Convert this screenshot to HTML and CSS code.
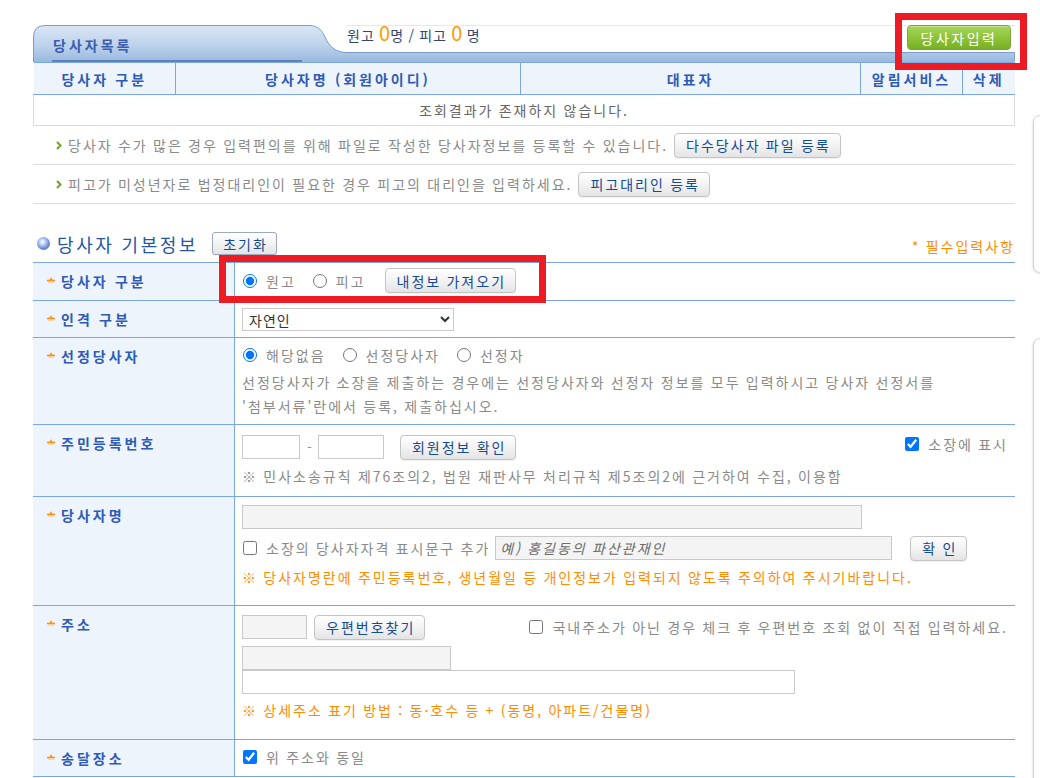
FILE: index.html
```html
<!DOCTYPE html>
<html lang="ko">
<head>
<meta charset="utf-8">
<title>당사자 입력</title>
<link rel="stylesheet" href="styles.css">
</head>
<body>
<div class="page">
  <section class="party-list">
    <div class="list-head">
      <svg class="tab-bg" width="982" height="37" viewBox="0 0 982 37" aria-hidden="true">
        <defs>
          <linearGradient id="tabg" x1="0" y1="0" x2="0" y2="1">
            <stop offset="0" stop-color="#dae7f5"/>
            <stop offset="0.6" stop-color="#b9cfea"/>
            <stop offset="1" stop-color="#98b8de"/>
          </linearGradient>
        </defs>
        <path d="M314 0.5 H982" stroke="#e8e8e8" fill="none"/>
        <path d="M0.5 37 V12 Q0.5 0.5 12 0.5 H276 C286 0.5 289 6 292 12 C296 21 302 27.5 314 27.5 H981.5 V37 Z" fill="url(#tabg)"/>
        <path d="M0.5 37 V12 Q0.5 0.5 12 0.5 H276 C286 0.5 289 6 292 12 C296 21 302 27.5 314 27.5 H981.5 V36" fill="none" stroke="#7b9bcc"/>
        <rect x="19" y="35" width="250" height="2" fill="#5f82b9"/>
      </svg>
      <div class="head-row">
        <div class="tab-label">당사자목록</div>
        <div class="summary">원고 <span class="cnt">0</span>명 / 피고 <span class="cnt">0</span> 명</div>
        <button class="btn-green" type="button">당사자입력</button>
      </div>
    </div>
    <table class="list-table">
      <colgroup>
        <col class="c1"><col class="c2"><col class="c3"><col class="c4"><col class="c5">
      </colgroup>
      <thead>
        <tr><th>당사자 구분</th><th>당사자명 (회원아이디)</th><th>대표자</th><th>알림서비스</th><th>삭제</th></tr>
      </thead>
      <tbody>
        <tr><td colspan="5">조회결과가 존재하지 않습니다.</td></tr>
      </tbody>
    </table>
    <div class="info">
      <svg class="chev" width="6" height="9" viewBox="0 0 6 9" aria-hidden="true"><polyline points="1,1 4.5,4.5 1,8" fill="none" stroke="#6fa324" stroke-width="2"/></svg>
      <span>당사자 수가 많은 경우 입력편의를 위해 파일로 작성한 당사자정보를 등록할 수 있습니다.</span>
      <button class="btn" type="button">다수당사자 파일 등록</button>
    </div>
    <div class="info">
      <svg class="chev" width="6" height="9" viewBox="0 0 6 9" aria-hidden="true"><polyline points="1,1 4.5,4.5 1,8" fill="none" stroke="#6fa324" stroke-width="2"/></svg>
      <span>피고가 미성년자로 법정대리인이 필요한 경우 피고의 대리인을 입력하세요.</span>
      <button class="btn" type="button">피고대리인 등록</button>
    </div>
  </section>

  <section class="basic">
    <div class="sec-head">
      <span class="orb"></span>
      <h2 class="sec-title">당사자 기본정보</h2>
      <button class="btn btn-reset" type="button">초기화</button>
      <span class="req">* 필수입력사항</span>
    </div>

    <div class="form">
      <div class="frow h1">
        <div class="flabel"><svg class="star" width="8" height="7" viewBox="0 0 8 7"><path d="M4 0 L5.2 2.5 L8 2.7 L8 4.3 L0 4.3 L0 2.7 L2.8 2.5 Z" fill="#f7941d"/><rect x="1" y="4.3" width="6" height="1.4" fill="#fbc98a"/></svg>당사자 구분</div>
        <div class="cell pt5">
          <div class="line l25">
            <label class="opt"><input type="radio" name="gubun" checked><span>원고</span></label>
            <label class="opt"><input type="radio" name="gubun"><span>피고</span></label>
            <button class="btn ml3" type="button">내정보 가져오기</button>
          </div>
        </div>
      </div>

      <div class="frow h2">
        <div class="flabel"><svg class="star" width="8" height="7" viewBox="0 0 8 7"><path d="M4 0 L5.2 2.5 L8 2.7 L8 4.3 L0 4.3 L0 2.7 L2.8 2.5 Z" fill="#f7941d"/><rect x="1" y="4.3" width="6" height="1.4" fill="#fbc98a"/></svg>인격 구분</div>
        <div class="cell pt7">
          <select class="sel"><option>자연인</option></select>
        </div>
      </div>

      <div class="frow h3">
        <div class="flabel"><svg class="star" width="8" height="7" viewBox="0 0 8 7"><path d="M4 0 L5.2 2.5 L8 2.7 L8 4.3 L0 4.3 L0 2.7 L2.8 2.5 Z" fill="#f7941d"/><rect x="1" y="4.3" width="6" height="1.4" fill="#fbc98a"/></svg>선정당사자</div>
        <div class="cell pt5">
          <div class="line l24">
            <label class="opt"><input type="radio" name="sj" checked><span>해당없음</span></label>
            <label class="opt"><input type="radio" name="sj"><span>선정당사자</span></label>
            <label class="opt"><input type="radio" name="sj"><span>선정자</span></label>
          </div>
          <p class="desc">선정당사자가 소장을 제출하는 경우에는 선정당사자와 선정자 정보를 모두 입력하시고 당사자 선정서를<br>'첨부서류'란에서 등록, 제출하십시오.</p>
        </div>
      </div>

      <div class="frow h4">
        <div class="flabel"><svg class="star" width="8" height="7" viewBox="0 0 8 7"><path d="M4 0 L5.2 2.5 L8 2.7 L8 4.3 L0 4.3 L0 2.7 L2.8 2.5 Z" fill="#f7941d"/><rect x="1" y="4.3" width="6" height="1.4" fill="#fbc98a"/></svg>주민등록번호</div>
        <div class="cell pt9">
          <div class="line l26">
            <input class="inp w-j1" type="text">
            <span class="dash">-</span>
            <input class="inp w-j2" type="text">
            <button class="btn ml16" type="button">회원정보 확인</button>
            <label class="chk right top"><input type="checkbox" checked><span>소장에 표시</span></label>
          </div>
          <p class="note">※ 민사소송규칙 제76조의2, 법원 재판사무 처리규칙 제5조의2에 근거하여 수집, 이용함</p>
        </div>
      </div>

      <div class="frow h5">
        <div class="flabel"><svg class="star" width="8" height="7" viewBox="0 0 8 7"><path d="M4 0 L5.2 2.5 L8 2.7 L8 4.3 L0 4.3 L0 2.7 L2.8 2.5 Z" fill="#f7941d"/><rect x="1" y="4.3" width="6" height="1.4" fill="#fbc98a"/></svg>당사자명</div>
        <div class="cell pt8">
          <input class="inp dis w-name" type="text" disabled>
          <div class="line l26 mt6">
            <label class="chk"><input type="checkbox"><span>소장의 당사자자격 표시문구 추가</span></label>
            <input class="inp dis w-qual ml5" type="text" placeholder="예) 홍길동의 파산관재인">
            <button class="btn ml18" type="button">확 인</button>
          </div>
          <p class="note orange">※ 당사자명란에 주민등록번호, 생년월일 등 개인정보가 입력되지 않도록 주의하여 주시기바랍니다.</p>
        </div>
      </div>

      <div class="frow h6">
        <div class="flabel"><svg class="star" width="8" height="7" viewBox="0 0 8 7"><path d="M4 0 L5.2 2.5 L8 2.7 L8 4.3 L0 4.3 L0 2.7 L2.8 2.5 Z" fill="#f7941d"/><rect x="1" y="4.3" width="6" height="1.4" fill="#fbc98a"/></svg>주소</div>
        <div class="cell pt8">
          <div class="line l26">
            <input class="inp dis w-zip" type="text">
            <button class="btn ml7" type="button">우편번호찾기</button>
            <label class="chk right"><input type="checkbox"><span>국내주소가 아닌 경우 체크 후 우편번호 조회 없이 직접 입력하세요.</span></label>
          </div>
          <input class="inp dis w-a1 mt6" type="text">
          <input class="inp w-a2" type="text">
          <p class="note orange mt5">※ 상세주소 표기 방법 : 동·호수 등 + (동명, 아파트/건물명)</p>
        </div>
      </div>

      <div class="frow h7">
        <div class="flabel"><svg class="star" width="8" height="7" viewBox="0 0 8 7"><path d="M4 0 L5.2 2.5 L8 2.7 L8 4.3 L0 4.3 L0 2.7 L2.8 2.5 Z" fill="#f7941d"/><rect x="1" y="4.3" width="6" height="1.4" fill="#fbc98a"/></svg>송달장소</div>
        <div class="cell pt5">
          <div class="line l24">
            <label class="chk"><input type="checkbox" checked><span>위 주소와 동일</span></label>
          </div>
        </div>
      </div>
    </div>
  </section>
</div>

<div class="side-panel sp1"></div>
<div class="side-panel sp2"></div>
<div class="mark mark-btn"></div>
<div class="mark mark-gubun"></div>
</body>
</html>
```

FILE: styles.css
```css
* { box-sizing: border-box; }
html, body { margin: 0; padding: 0; background: #fff; overflow: hidden; }
body {
  font-family: "Noto Sans CJK KR", "Noto Sans", sans-serif;
  font-size: 14px;
  line-height: 20px;
  letter-spacing: 2px;
  word-spacing: -0.6px;
  color: #8a8a8a;
  width: 1040px;
  height: 778px;
  position: relative;
}
button, input, select { font-family: inherit; font-size: 14px; letter-spacing: 2px; word-spacing: -0.6px; }
p, h2 { margin: 0; }

.page { width: 982px; margin-left: 33px; padding-top: 25px; }

/* list header */
.list-head { display: grid; height: 37px; }
.list-head > * { grid-area: 1 / 1; }
.tab-bg { display: block; }
.head-row { display: flex; align-items: flex-start; }
.tab-label {
  width: 314px;
  padding: 10px 0 0 20px;
  font-weight: bold;
  color: #3a5db2;
  line-height: 20px;
  letter-spacing: 3px;
}
.summary { color: #34466e; line-height: 20px; margin-top: -2px; letter-spacing: 1px; }
.summary .cnt { color: #ff9a00; font-size: 20px; letter-spacing: 0; }
.btn-green {
  margin-left: auto;
  margin-right: 4px;
  width: 104px;
  height: 25px;
  padding: 0;
  border: 1px solid #78a637;
  border-radius: 4px;
  background: linear-gradient(#a8d55c, #8cc236 55%, #78af26);
  color: #fff;
  letter-spacing: 2.5px;
  box-shadow: inset 0 1px 0 rgba(255,255,255,0.35);
}

.list-table { width: 981px; border-collapse: collapse; table-layout: fixed; }
.list-table .c1 { width: 142px; }
.list-table .c2 { width: 345px; }
.list-table .c3 { width: 340px; }
.list-table .c4 { width: 102px; }
.list-table .c5 { width: 52px; }
.list-table th {
  height: 32px;
  padding: 0;
  background: #eef4fc;
  border-top: 1px solid #7aa7e3;
  border-bottom: 1px solid #7aa7e3;
  border-left: 1px solid #7aa7e3;
  color: #2f5bb7;
  font-weight: bold;
  letter-spacing: 3px;
}
.list-table th:first-child { border-left: none; }
.list-table td {
  height: 31px;
  padding: 0;
  border: 1px solid #dcdcdc;
  border-top: none;
  text-align: center;
  color: #666;
}

.info {
  display: flex;
  align-items: center;
  height: 39px;
  border-bottom: 1px solid #dcdcdc;
  padding-left: 23px;
}
.chev { margin-right: 6px; flex: none; }
.info .btn { margin-left: 6px; }

.btn {
  height: 25px;
  padding: 0 9px 0 11px;
  border: 1px solid #c4c4c4;
  border-radius: 4px;
  background: linear-gradient(#ffffff, #f3f3f3 50%, #e4e4e4);
  color: #124b96;
  white-space: nowrap;
  box-shadow: 0 1px 1px rgba(0,0,0,0.06);
  flex: none;
}

/* section */
.sec-head { display: flex; align-items: center; height: 25px; margin-top: 27px; }
.orb {
  width: 13px; height: 13px; border-radius: 50%;
  margin: 0 7px 0 4px;
  background: radial-gradient(circle at 42% 38%, #ffffff 0, #c9d9f5 22%, #6f8fd8 58%, #34539f 100%);
}
.sec-title { font-size: 18px; font-weight: normal; color: #2456a6; line-height: 24px; letter-spacing: 2.6px; }
.btn-reset { margin-left: 14px; height: 23px; padding: 0 8px 0 10px; border-color: #9aa9bf; border-radius: 3px; }
.req { margin-left: auto; margin-top: 4px; color: #ff8c00; margin-right: 0; }

/* form */
.form { margin-top: 6px; border-top: 1px solid #7aa7e3; }
.frow { display: grid; grid-template-columns: 202px 1fr; border-bottom: 1px solid #7aa7e3; }
.h1 { height: 38px; }
.h2 { height: 37px; }
.h3 { height: 87px; }
.h4 { height: 72px; }
.h5 { height: 109px; }
.h6 { height: 134px; }
.h7 { height: 37px; }
.flabel {
  display: flex;
  align-items: flex-start;
  background: #eef4fc;
  border-right: 1px solid #7aa7e3;
  padding: 8px 0 0 14px;
  color: #2f5bb7;
  font-weight: bold;
  line-height: 20px;
  letter-spacing: 3px;
}
.star { margin: 6px 6px 0 0; flex: none; }
.cell { padding-left: 7px; padding-right: 7px; }
.pt5 { padding-top: 5px; }
.pt7 { padding-top: 7px; }
.pt8 { padding-top: 8px; }
.pt9 { padding-top: 9px; }
.line { display: flex; align-items: center; }
.l24 { height: 24px; }
.l25 { height: 25px; }
.l26 { height: 26px; }
.mt5 { margin-top: 5px; }
.mt6 { margin-top: 6px; }
.ml3 { margin-left: 3px; }
.ml5 { margin-left: 5px; }
.ml7 { margin-left: 7px; }
.ml16 { margin-left: 16px; }
.ml18 { margin-left: 18px; }

.opt { display: inline-flex; align-items: center; gap: 9px; margin-right: 16px; }
.opt input, .chk input { width: 14px; height: 14px; margin: 0 0 0 1px; flex: none; }
.chk { display: inline-flex; align-items: center; gap: 9px; }
.chk.right { margin-left: auto; }
.chk.top { align-self: flex-start; margin-top: 0; }

.desc { margin-top: 3px; line-height: 24px; }
.note { margin-top: 4px; line-height: 24px; }
.orange { color: #ff8c00; }

.inp {
  display: block;
  height: 24px;
  padding: 0 4px;
  border: 1px solid #c9c9c9;
  background: #fff;
  color: #555;
  outline: none;
  letter-spacing: 2px;
}
.inp.dis { background: #f4f4f4; }
.inp::placeholder { color: #6b6b6b; font-style: italic; }
.w-j1 { width: 58px; }
.w-j2 { width: 66px; }
.dash { margin: 0 4px 0 7px; color: #999; }
.w-name { width: 620px; }
.w-qual { width: 397px; }
.w-zip { width: 65px; }
.w-a1 { width: 209px; }
.w-a2 { width: 553px; }

.sel {
  width: 212px;
  height: 23px;
  padding: 0 2px;
  border: 1px solid #c9c9c9;
  border-radius: 0;
  background: #fff;
  color: #333;
  letter-spacing: 1px;
}

/* decorative */
.side-panel {
  position: absolute;
  left: 1033px;
  width: 40px;
  border: 1px solid #d2d2d2;
  border-radius: 7px;
  background: #fff;
  box-shadow: -1px 1px 2px rgba(0,0,0,0.08);
}
.sp1 { top: 115px; height: 158px; }
.sp2 { top: 338px; height: 500px; }

.mark { position: absolute; border: 7px solid #ed1c24; pointer-events: none; }
.mark-btn { left: 895px; top: 13px; width: 132px; height: 57px; }
.mark-gubun { left: 219px; top: 255px; width: 327px; height: 48px; }
```
